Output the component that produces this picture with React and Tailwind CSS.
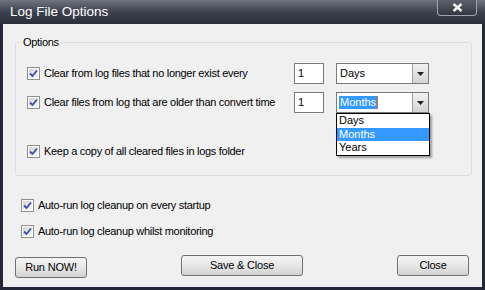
import { useState } from "react";

const font = "font-['Tahoma','Liberation_Sans',sans-serif]";

const CheckBox = ({ label }) => (
  <label className="flex items-center gap-[4px] text-[11px] tracking-[-0.3px] text-black leading-[13px]">
    <span className="w-[13px] h-[13px] border border-[#8e8f8f] bg-white p-[1px] flex">
      <span className="flex-1 bg-gradient-to-br from-[#d4d4d4] to-[#f9f9f9] flex items-center justify-center">
        <svg width="9" height="9" viewBox="0 0 9 9">
          <path d="M1 4.5 L3.5 7 L8 1.5" fill="none" stroke="#3a4db0" strokeWidth="1.8" />
        </svg>
      </span>
    </span>
    <span>{label}</span>
  </label>
);

const Select = ({ value, highlighted }) => (
  <div className="w-[93px] h-[21px] border border-[#7a7a7a] bg-white flex">
    <div className="flex-1 flex items-center pl-[2px] text-[11px]">
      {highlighted ? (
        <>
          <span className="bg-[#3399ff] text-white px-[1px] leading-[13px]">{value}</span>
          <span className="w-[1px] h-[13px] bg-[#e46a14]" />
        </>
      ) : (
        <span className="pl-[1px]">{value}</span>
      )}
    </div>
    <div className="w-[16px] border-l border-[#a0a0a0] bg-gradient-to-b from-[#f2f2f2] to-[#d4d4d4] flex items-center justify-center">
      <svg width="7" height="4" viewBox="0 0 7 4">
        <path d="M0 0 H7 L3.5 4 Z" fill="#222" />
      </svg>
    </div>
  </div>
);

const NumBox = ({ value }) => (
  <div className="w-[30px] h-[21px] border border-[#7a7a7a] bg-white text-[11px] flex items-center pl-[3px]">
    {value}
  </div>
);

const Button = ({ children, className }) => (
  <button
    className={`h-[21px] rounded-[3px] border border-[#707070] text-[11px] tracking-[-0.2px] text-black bg-gradient-to-b from-[#f4f4f4] via-[#e8e8e8] to-[#d2d2d2] ${className}`}
  >
    {children}
  </button>
);

export default function App() {
  const [open] = useState(true);

  return (
    <div className={`w-[485px] h-[290px] bg-[#252937] flex flex-col ${font}`}>
      <div className="h-[24px] bg-gradient-to-b from-[#6f7480] via-[#3e4250] to-[#2a2e3b] flex items-start justify-between pl-[10px] pr-[8px]">
        <span className="text-white text-[13.5px] leading-[24px] font-['Liberation_Sans',sans-serif]">
          Log File Options
        </span>
        <div className="w-[40px] h-[16px] rounded-b-[4px] border border-t-0 border-[#9ea3ae] bg-gradient-to-b from-[#5b606c] to-[#343845] flex items-center justify-center">
          <svg width="11" height="9" viewBox="0 0 11 9">
            <path d="M1.5 1 L9.5 8 M9.5 1 L1.5 8" stroke="#f4f4f4" strokeWidth="2.4" />
          </svg>
        </div>
      </div>

      <div className="mx-[3px] mb-[3px] flex-1 bg-[#f0f0f0] flex flex-col px-[12px]">
        <fieldset className="mt-[12px] w-[457px] h-[140px] border border-[#d5dfe5] rounded-[3px] pl-[5px] pr-0">
          <legend className="px-[2px] text-[11px] tracking-[-0.3px] leading-[13px]">Options</legend>

          <div className="pl-[6px]">
            <div className="mt-[14px] flex items-center h-[21px]">
              <div className="w-[267px]">
                <CheckBox label="Clear from log files that no longer exist every" />
              </div>
              <NumBox value="1" />
              <div className="ml-[12px]">
                <Select value="Days" />
              </div>
            </div>

            <div className="mt-[8px] flex items-center h-[21px]">
              <div className="w-[267px]">
                <CheckBox label="Clear files from log that are older than convert time" />
              </div>
              <NumBox value="1" />
              <div className="ml-[12px] relative">
                <Select value="Months" highlighted />
                {open && (
                  <div className="absolute left-0 top-[21px] w-[94px] border border-black bg-white text-[11px] leading-[13.5px] shadow-[2px_2px_2px_rgba(0,0,0,0.35)] z-10">
                    <div className="px-[2px]">Days</div>
                    <div className="px-[2px] bg-[#3399ff] text-white">Months</div>
                    <div className="px-[2px]">Years</div>
                  </div>
                )}
              </div>
            </div>

            <div className="mt-[28px] flex items-center h-[21px]">
              <CheckBox label="Keep a copy of all cleared files in logs folder" />
            </div>
          </div>
        </fieldset>

        <div className="mt-[23px] pl-[6px] flex flex-col gap-[13px]">
          <CheckBox label="Auto-run log cleanup on every startup" />
          <CheckBox label="Auto-run log cleanup whilst monitoring" />
        </div>

        <div className="mt-[17px] flex items-start justify-between">
          <Button className="w-[72px] mt-[2px]">Run NOW!</Button>
          <Button className="w-[122px]">Save &amp; Close</Button>
          <Button className="w-[72px] mr-[1px]">Close</Button>
        </div>
      </div>
    </div>
  );
}
